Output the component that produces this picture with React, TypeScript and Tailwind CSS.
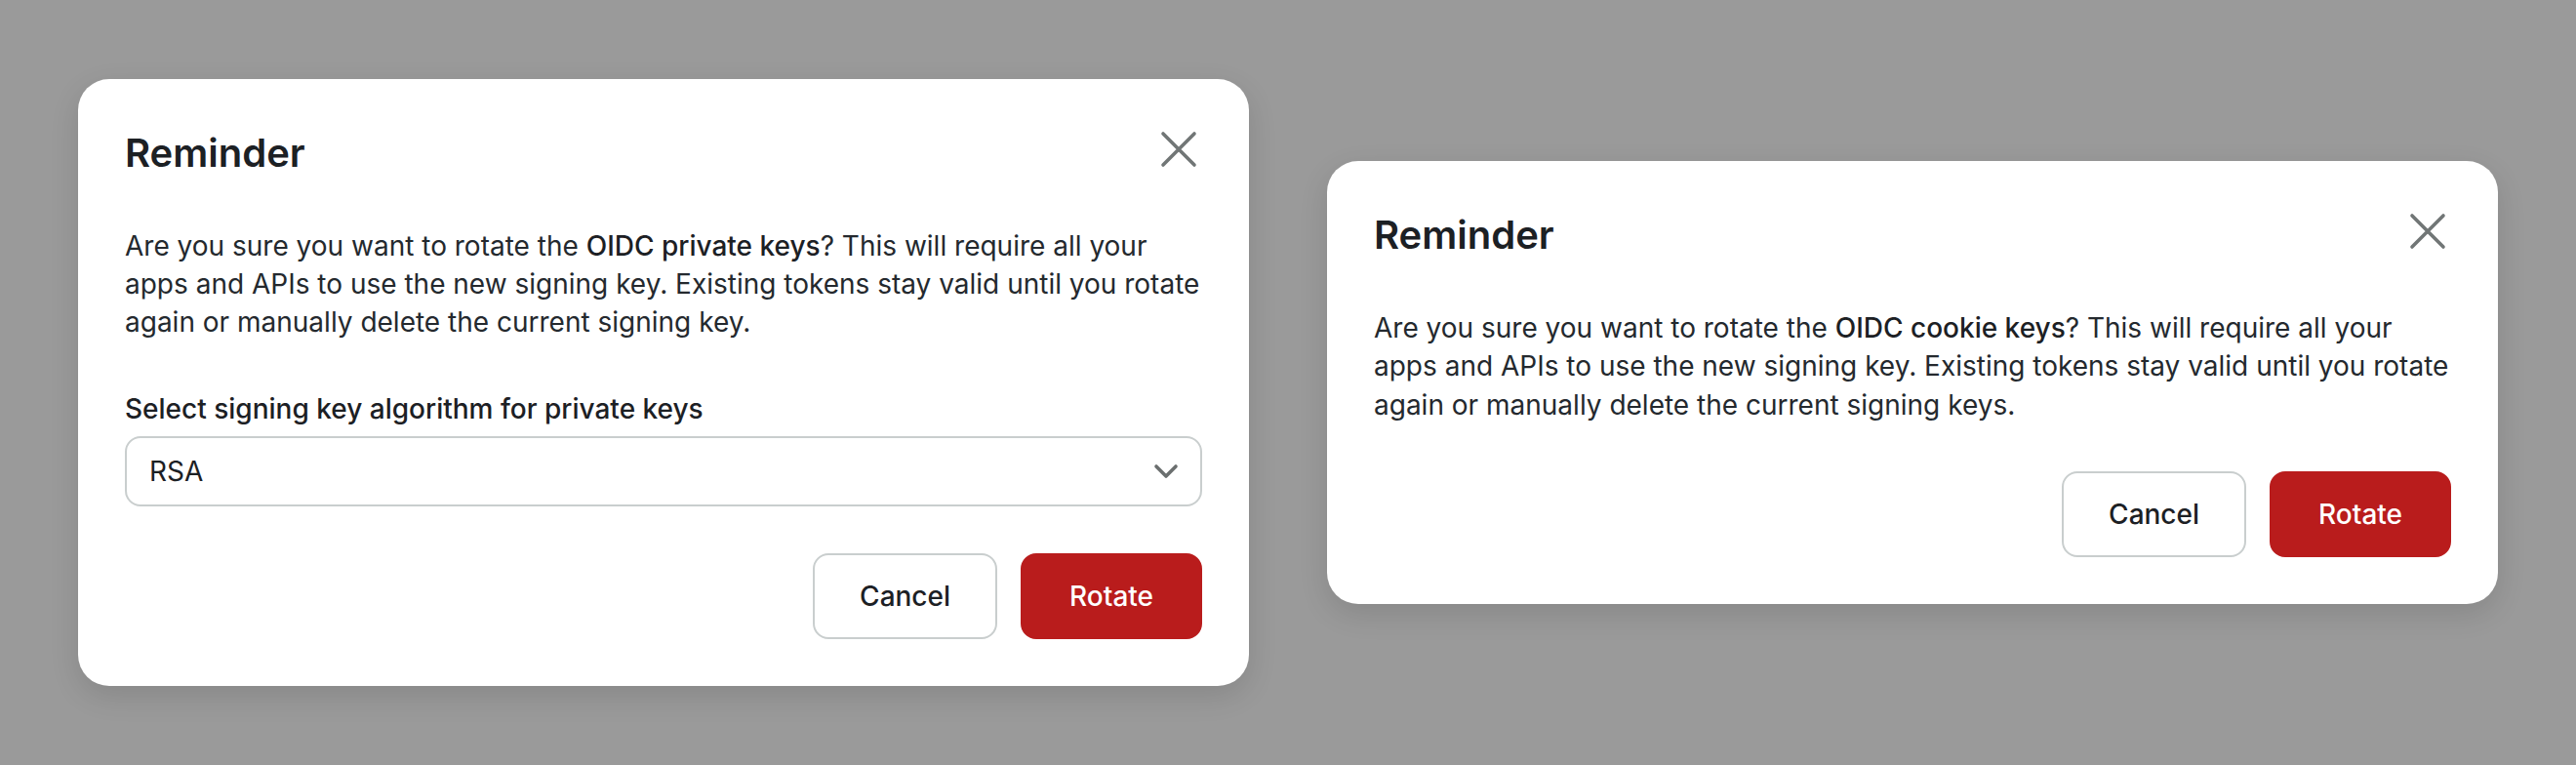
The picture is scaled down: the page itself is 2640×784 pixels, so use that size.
import React from "react";

const font = { fontFamily: "Inter, 'Noto Sans', sans-serif" };

function CloseIcon() {
  return (
    <svg width="48" height="48" viewBox="0 0 48 48" className="shrink-0">
      <path d="M8 8 L40 40 M40 8 L8 40" stroke="#717676" strokeWidth="3.6" strokeLinecap="round" fill="none" />
    </svg>
  );
}

function Chevron() {
  return (
    <svg width="26" height="16" viewBox="0 0 26 16" className="shrink-0">
      <path d="M3 3 L13 13 L23 3" stroke="#6b6f6f" strokeWidth="3.6" strokeLinecap="round" strokeLinejoin="round" fill="none" />
    </svg>
  );
}

function Buttons() {
  return (
    <div className="flex justify-end gap-[24px]">
      <button className="h-[88px] px-[46px] border-2 border-[#c9cece] rounded-[16px] bg-white text-[28px] font-medium text-[#1c2024]">
        Cancel
      </button>
      <button className="h-[88px] px-[48px] border-2 border-[#b91c1c] rounded-[16px] bg-[#b91c1c] text-[28px] font-medium text-white">
        Rotate
      </button>
    </div>
  );
}

function Card({ which }: { which: "private" | "cookie" }) {
  return (
    <div className="w-[1200px] bg-white rounded-[32px] p-[48px] flex flex-col shadow-[0_10px_30px_rgba(0,0,0,0.12)]">
      <div className="flex items-start justify-between">
        <h2 className="text-[40px] leading-[56px] font-semibold text-[#1c2024]">Reminder</h2>
        <CloseIcon />
      </div>
      <p className="mt-[48px] text-[28px] leading-[39.2px] text-[#24292e]">
        Are you sure you want to rotate the{" "}
        <span className="font-medium text-[#1c2024]">
          OIDC {which === "private" ? "private" : "cookie"} keys
        </span>
        ? This will require all your
        <br />
        apps and APIs to use the new signing key. Existing tokens stay valid until you rotate
        <br />
        again or manually delete the current signing {which === "private" ? "key." : "keys."}
      </p>
      {which === "private" && (
        <div className="mt-[50px] flex flex-col gap-[8px]">
          <label className="text-[28px] leading-[39.2px] font-medium text-[#1c2024]">
            Select signing key algorithm for private keys
          </label>
          <div className="h-[72px] flex items-center justify-between pl-[23px] pr-[22px] border-2 border-[#c9cece] rounded-[16px]">
            <span className="text-[28px] text-[#1c2024]">RSA</span>
            <Chevron />
          </div>
        </div>
      )}
      <div className="mt-[48px]">
        <Buttons />
      </div>
    </div>
  );
}

export default function App() {
  return (
    <div style={font} className="w-[2640px] h-[784px] bg-[#9a9a9a] flex items-center justify-center gap-[80px]">
      <Card which="private" />
      <Card which="cookie" />
    </div>
  );
}
